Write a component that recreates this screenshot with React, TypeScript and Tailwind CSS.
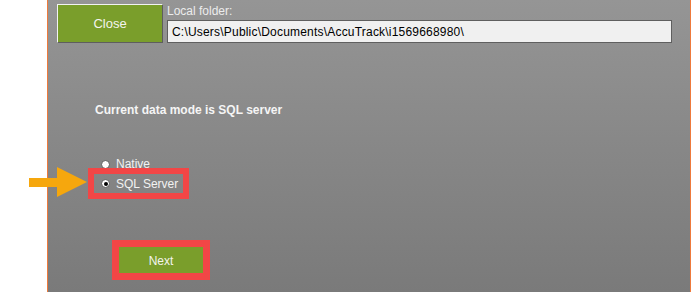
import React from 'react';

const font = { fontFamily: '"Liberation Sans", Arial, sans-serif' };

function Radio({ checked }: { checked?: boolean }) {
  return (
    <span className="flex h-[9px] w-[9px] items-center justify-center rounded-full border border-[#5c5c5c] bg-white">
      {checked && <span className="h-[4px] w-[4px] rounded-full bg-black" />}
    </span>
  );
}

export default function App() {
  return (
    <div className="relative flex h-[292px] w-[691px] overflow-hidden bg-white" style={font}>
      {/* white margin on the left */}
      <div className="w-[47px] shrink-0 bg-white" />

      {/* dialog panel */}
      <div className="flex flex-1 flex-col border-l border-r border-[#ee7a3c] bg-gradient-to-b from-[#959595] to-[#7a7a7a] pl-[9px] pt-[4px]">
        <div className="flex">
          <button className="h-[39px] w-[106px] border border-t-[#f2f2f2] border-l-[#f2f2f2] border-b-[#5e5e5e] border-r-[#5e5e5e] bg-[#7a9e2b] text-[13px] text-[#f4f4ee]">
            Close
          </button>
          <div className="ml-[4px] flex flex-col">
            <span className="h-[16px] text-[12px] leading-[14px] text-[#ececec]">Local folder:</span>
            <div className="flex h-[23px] w-[505px] items-center border border-[#5f5f5f] bg-[#f0f0f0] pl-[4px] text-[12px] tracking-[0.2px] text-black">
              C:\Users\Public\Documents\AccuTrack\i1569668980\
            </div>
          </div>
        </div>

        <p className="ml-[38px] mt-[60px] text-[12px] font-bold leading-[14px] text-[#f5f5f5]">
          Current data mode is SQL server
        </p>

        <div className="ml-[31px] mt-[41px] flex flex-col">
          <label className="flex h-[12px] items-center gap-[6px] pl-[13px] text-[12px] text-[#f2f2f2]">
            <Radio />
            Native
          </label>
          <label className="-mt-[2px] flex h-[31px] w-[101px] items-center gap-[6px] border-[6px] border-[#f24646] pl-[7px] text-[12px] text-[#f2f2f2]">
            <Radio checked />
            SQL Server
          </label>
        </div>

        <div className="ml-[55px] mt-[41px] w-[98px] border-[7px] border-[#f24646]">
          <button className="flex h-[26px] w-full items-center justify-center bg-[#7a9e2b] pt-[2px] text-[12px] text-[#f4f4ee]">
            Next
          </button>
        </div>
      </div>

      {/* annotation arrow */}
      <svg className="absolute left-[29px] top-[167px]" width="58" height="30" viewBox="0 0 58 30">
        <polygon points="0,11 28,11 28,0 58,15 28,30 28,20 0,20" fill="#f6a70d" />
      </svg>
    </div>
  );
}
